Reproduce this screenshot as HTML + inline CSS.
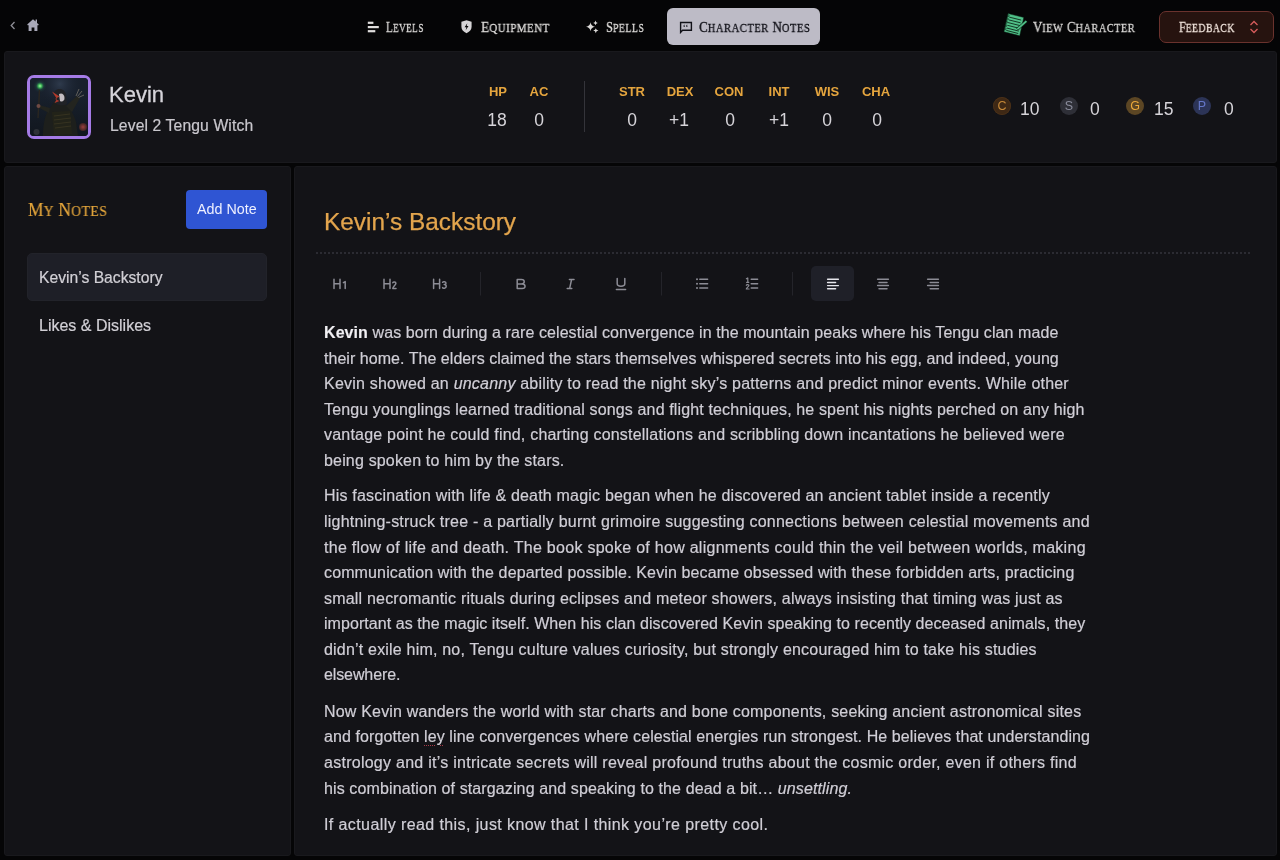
<!DOCTYPE html>
<html><head><meta charset="utf-8">
<style>
*{box-sizing:border-box;margin:0;padding:0}
html,body{width:1280px;height:860px;overflow:hidden;background:#050506;font-family:"Liberation Sans",sans-serif;color:#d8d6dc}
.a{position:absolute;white-space:nowrap}
.sc{font-family:"Liberation Serif",serif;color:#dddbd9;transform-origin:0 50%;will-change:transform;-webkit-text-stroke:0.3px currentColor}
.sc b{font-weight:normal;font-size:14.6px}
.sc i{font-style:normal;font-size:11.7px;letter-spacing:0.6px}
.card{position:absolute;background:#131317;border-radius:3px;border:1px solid #19191d}
.lbl{position:absolute;color:#e5a53e;font-size:13px;font-weight:bold;text-align:center;width:40px;line-height:14px}
.val{position:absolute;color:#d6d4d9;font-size:17.5px;text-align:center;width:40px;line-height:18px}
.coin{position:absolute;width:18px;height:18px;border-radius:50%;font-size:12.5px;line-height:19.5px;text-align:center}
.cv{position:absolute;font-size:17.5px;color:#d6d4d9;line-height:18px;top:99.5px!important}
.ln{position:absolute;left:324px;font-size:16px;line-height:20px;color:#d0ced6;white-space:nowrap;-webkit-text-stroke:0.2px #d0ced6}
.ln b{color:#f2f1f4}
.sp{text-decoration:underline dotted #a83a48;text-decoration-thickness:1.3px;text-underline-offset:3px}
.tb{position:absolute;color:#8c8c95}
</style></head>
<body>
<div id="root" style="position:absolute;left:0;top:0;width:1280px;height:860px;will-change:transform">
<!-- NAV -->
<svg class="a" style="left:10px;top:21px" width="6" height="9" viewBox="0 0 6 9"><path d="M4.5 1 L1.2 4.5 L4.5 8" fill="none" stroke="#8e8e96" stroke-width="1.3"/></svg>
<svg class="a" style="left:27px;top:18px" width="12" height="14" viewBox="0 0 12 14"><path d="M6 1.2 L8.6 3.6 V1.5 H10 V4.9 L11.8 6.6 L11 7.4 L10.4 6.9 V13 H7.4 V9.4 H4.6 V13 H1.6 V6.9 L1 7.4 L0.2 6.6 Z" fill="#a9a9b8"/></svg>

<svg class="a" style="left:367px;top:21px" width="12" height="12" viewBox="0 0 12 12"><rect x="0.8" y="0.7" width="5.6" height="2.2" fill="#e0dedd"/><rect x="0.8" y="5" width="11" height="2.2" fill="#e0dedd"/><rect x="0.8" y="9.1" width="7.5" height="2.2" fill="#e0dedd"/></svg>
<div class="a sc" style="transform:scaleX(0.782);left:386px;top:18px;line-height:18px"><b>L</b><i>EVELS</i></div>

<svg class="a" style="left:461px;top:20px" width="11" height="14" viewBox="0 0 11 14"><path d="M5.5 0.3 L10.6 1.8 V6.8 C10.6 10 8.3 12 5.5 13.2 C2.7 12 0.4 10 0.4 6.8 V1.8 Z" fill="#d6d4d6"/><path d="M6.3 3.2 L3.6 7.3 H5.4 L4.7 10.3 L7.5 6.1 H5.7 Z" fill="#050506"/></svg>
<div class="a sc" style="transform:scaleX(0.930);left:481px;top:18px;line-height:18px"><b>E</b><i>QUIPMENT</i></div>

<svg class="a" style="left:586px;top:20px" width="13" height="14" viewBox="0 0 13 14"><path d="M4.5 2.3 Q5 6.2 9 6.8 Q5 7.4 4.5 11.3 Q4 7.4 0 6.8 Q4 6.2 4.5 2.3Z" fill="#dcdad8"/><path d="M9.5 0.5 Q9.8 2.6 11.8 2.9 Q9.8 3.2 9.5 5.3 Q9.2 3.2 7.2 2.9 Q9.2 2.6 9.5 0.5Z" fill="#dcdad8"/><path d="M9.8 8.3 Q10.1 10.3 12.5 10.6 Q10.1 10.9 9.8 13.2 Q9.5 10.9 7.2 10.6 Q9.5 10.3 9.8 8.3Z" fill="#dcdad8"/></svg>
<div class="a sc" style="transform:scaleX(0.842);left:606px;top:18px;line-height:18px"><b>S</b><i>PELLS</i></div>

<div class="a" style="left:667px;top:8px;width:153px;height:37px;background:#bdbbc6;border-radius:6px"></div>
<svg class="a" style="left:679px;top:21px" width="14" height="13" viewBox="0 0 14 13"><path d="M1.6 1.5 H12.4 V9.3 H3.6 L1.6 11.4 Z" fill="none" stroke="#111118" stroke-width="1.4" stroke-linejoin="miter"/><path d="M4.6 4.6 C4.6 3.9 5.2 3.6 5.8 3.7 L5.6 4.3 C5.2 4.4 5.3 4.7 5.5 4.8 C6 4.9 6 6.1 5.2 6.1 C4.7 6.1 4.6 5.6 4.6 5.1Z M7.3 4.6 C7.3 3.9 7.9 3.6 8.5 3.7 L8.3 4.3 C7.9 4.4 8 4.7 8.2 4.8 C8.7 4.9 8.7 6.1 7.9 6.1 C7.4 6.1 7.3 5.6 7.3 5.1Z" fill="#111118"/></svg>
<div class="a sc" style="transform:scaleX(0.901);left:699px;top:18px;line-height:18px;color:#0e0e15"><b>C</b><i>HARACTER</i> <b>N</b><i>OTES</i></div>

<svg class="a" style="left:1003px;top:13px" width="25" height="24" viewBox="0 0 25 24"><path d="M5.1 0.6 L20.75 4.4 L16.7 22.8 L1 18.75 Z" fill="#50c088" stroke="#0c2818" stroke-width="0.5"/><g stroke="#0c2818" stroke-width="0.9"><path d="M6.28 4.14L18.18 7.07"/><path d="M5.67 6.86L17.58 9.83"/><path d="M5.05 9.59L16.97 12.59"/><path d="M4.44 12.31L16.36 15.35"/><path d="M3.82 15.03L15.75 18.11"/><path d="M3.29 17.39L15.23 20.50"/></g><circle cx="5.21" cy="2.78" r="0.9" fill="none" stroke="#0c2818" stroke-width="0.7"/><circle cx="4.47" cy="6.04" r="0.9" fill="none" stroke="#0c2818" stroke-width="0.7"/><circle cx="3.73" cy="9.31" r="0.9" fill="none" stroke="#0c2818" stroke-width="0.7"/><circle cx="2.99" cy="12.58" r="0.9" fill="none" stroke="#0c2818" stroke-width="0.7"/><circle cx="2.26" cy="15.85" r="0.9" fill="none" stroke="#0c2818" stroke-width="0.7"/><path d="M23.6 8 L14.2 16.4" stroke="#0c2818" stroke-width="3"/><path d="M23.4 8.1 L14.4 16.2" stroke="#50c088" stroke-width="1.8"/></svg>
<div class="a sc" style="transform:scaleX(0.882);left:1033px;top:18px;line-height:18px"><b>V</b><i>IEW</i> <b>C</b><i>HARACTER</i></div>

<div class="a" style="left:1159px;top:11px;width:115px;height:32px;background:#26130f;border:1px solid #6a322d;border-radius:7px"></div>
<div class="a sc" style="transform:scaleX(0.827);left:1179px;top:18px;line-height:18px;color:#efe2da"><b>F</b><i>EEDBACK</i></div>
<svg class="a" style="left:1249px;top:20px" width="10" height="14" viewBox="0 0 10 14"><path d="M1.5 5 L5 1.5 L8.5 5 M1.5 9 L5 12.5 L8.5 9" fill="none" stroke="#d65c5c" stroke-width="1.3"/></svg>

<!-- CARDS -->
<div class="card" style="left:4px;top:51px;width:1273px;height:112px"></div>
<div class="card" style="left:4px;top:166px;width:287px;height:690px"></div>
<div class="card" style="left:294px;top:166px;width:983px;height:690px"></div>

<!-- HEADER -->
<div class="a" style="left:27px;top:75px;width:64px;height:64px;border:3px solid #a57be6;border-radius:7px;overflow:hidden;background:#141a26">
<svg width="58" height="58" viewBox="0 0 58 58" style="display:block"><defs>
<radialGradient id="gl" cx="10" cy="8" r="7" gradientUnits="userSpaceOnUse"><stop offset="0" stop-color="#a8f8a0"/><stop offset="0.25" stop-color="#3fb85a"/><stop offset="0.55" stop-color="#1f4a40" stop-opacity="0.6"/><stop offset="1" stop-color="#1c2533" stop-opacity="0"/></radialGradient>
<radialGradient id="mist" cx="30" cy="6" r="22" gradientUnits="userSpaceOnUse"><stop offset="0" stop-color="#2e3a4c"/><stop offset="1" stop-color="#1a2230" stop-opacity="0"/></radialGradient>
<radialGradient id="sk" cx="53" cy="49" r="4" gradientUnits="userSpaceOnUse"><stop offset="0" stop-color="#9a4040"/><stop offset="1" stop-color="#3e2424"/></radialGradient>
</defs>
<rect width="58" height="58" fill="#18202c"/>
<rect width="58" height="58" fill="url(#mist)"/>
<linearGradient id="dk" x1="0" y1="0" x2="0" y2="1"><stop offset="0.3" stop-color="#0e1218" stop-opacity="0"/><stop offset="1" stop-color="#0e1218" stop-opacity="0.7"/></linearGradient><rect width="58" height="58" fill="url(#dk)"/>
<rect width="58" height="58" fill="url(#gl)"/>
<path d="M9.5 12 L8 40" stroke="#2a2620" stroke-width="1.4"/>
<path d="M13 58 C13 46 15 36 20 30 L24 24 C28 22 33 24 36 27 C40 30 44 36 46 44 L48 58 Z" fill="#1d1f1c"/>
<path d="M20 30 L9 27 L8.5 29.5 L19 35 Z" fill="#23241f"/>
<path d="M36 28 L47 18 L50 20 L42 34 Z" fill="#23241f"/>
<path d="M46 18 L49 11 M47.5 18.5 L52 13 M48.5 19.5 L54 17" stroke="#6a6660" stroke-width="0.9"/>
<circle cx="8.5" cy="28" r="2" fill="#6e4a44"/>
<path d="M24 16 C24 10 34 9 36 16 L37 26 C34 28 28 28 25 25 Z" fill="#202226"/>
<path d="M29 16 C31.5 14.5 34.5 16 34.5 20 C34.5 23 32 24.5 30 23 Z" fill="#c4bec2"/>
<path d="M22 13.5 L29.5 18.5 L25 21 L29.5 23 L24.5 25 L27 21 Z" fill="#b03a2c"/>
<path d="M22 34 L40 33 L42 56 L24 57 Z" fill="#24231a" opacity="0.9"/>
<path d="M24 38 L40 36 M24 42 L41 40 M24 46 L41 44 M25 50 L41 48" stroke="#4a4428" stroke-width="0.7" opacity="0.7"/>
<circle cx="53" cy="49" r="4" fill="url(#sk)"/>
<circle cx="6.5" cy="54" r="3" fill="#3a3c40" opacity="0.7"/>
</svg></div>
<div class="a" style="left:109px;top:83px;font-size:22px;line-height:24px;color:#d6d4da;-webkit-text-stroke:0.3px #d6d4da">Kevin</div>
<div class="a" style="left:110px;top:117px;font-size:15.7px;line-height:18px;color:#c9c7cd;letter-spacing:0.12px;-webkit-text-stroke:0.2px #c9c7cd">Level 2 Tengu Witch</div>

<div class="lbl" style="left:478px;top:84.5px">HP</div>
<div class="lbl" style="left:519px;top:84.5px">AC</div>
<div class="val" style="left:477px;top:110.5px">18</div>
<div class="val" style="left:519px;top:110.5px">0</div>
<div class="a" style="left:584px;top:81px;width:1px;height:51px;background:#34343a"></div>
<div class="lbl" style="left:612px;top:84.5px">STR</div>
<div class="lbl" style="left:660px;top:84.5px">DEX</div>
<div class="lbl" style="left:709px;top:84.5px">CON</div>
<div class="lbl" style="left:759px;top:84.5px">INT</div>
<div class="lbl" style="left:807px;top:84.5px">WIS</div>
<div class="lbl" style="left:856px;top:84.5px">CHA</div>
<div class="val" style="left:612px;top:110.5px">0</div>
<div class="val" style="left:659px;top:110.5px">+1</div>
<div class="val" style="left:710px;top:110.5px">0</div>
<div class="val" style="left:759px;top:110.5px">+1</div>
<div class="val" style="left:807px;top:110.5px">0</div>
<div class="val" style="left:857px;top:110.5px">0</div>

<div class="coin" style="left:993px;top:97px;background:#3e2815;color:#c58838;box-shadow:inset 0 0 0 1px #4a3018">C</div>
<div class="cv" style="left:1020px;top:99px">10</div>
<div class="coin" style="left:1060px;top:97px;background:#2e2f37;color:#8a8c9c">S</div>
<div class="cv" style="left:1090px;top:99px">0</div>
<div class="coin" style="left:1126px;top:97px;background:#5c4624;color:#eba93a">G</div>
<div class="cv" style="left:1154px;top:99px">15</div>
<div class="coin" style="left:1193px;top:97px;background:#2c3457;color:#6577c8">P</div>
<div class="cv" style="left:1224px;top:99px">0</div>

<!-- SIDEBAR -->
<div class="a sc" style="left:28px;top:200px;line-height:20px;color:#e6a73c;letter-spacing:0.25px;transform:scaleX(0.97);-webkit-text-stroke:0.2px #e6a73c"><b style="font-size:18px">M</b><i style="font-size:14px">Y</i> <b style="font-size:18px">N</b><i style="font-size:14px">OTES</i></div>
<div class="a" style="left:186px;top:190px;width:81px;height:39px;background:#2f55d3;border-radius:4px"></div>
<div class="a" style="left:197px;top:199.5px;font-size:14.3px;line-height:18px;color:#eef0ff">Add Note</div>
<div class="a" style="left:27px;top:253px;width:240px;height:47.5px;background:#1e1f27;border:1px solid #22232a;border-radius:5px"></div>
<div class="a" style="left:39px;top:269px;font-size:15.7px;line-height:18px;color:#d2d0d6;-webkit-text-stroke:0.2px #d2d0d6">Kevin&#8217;s Backstory</div>
<div class="a" style="left:39px;top:317px;font-size:16px;line-height:18px;color:#d2d0d6;-webkit-text-stroke:0.2px #d2d0d6">Likes &amp; Dislikes</div>

<!-- MAIN -->
<div class="a" style="left:324px;top:207.5px;font-size:24.4px;line-height:28px;color:#e3a54d;-webkit-text-stroke:0.25px #e3a54d">Kevin&#8217;s Backstory</div>
<div class="a" style="left:316px;top:252px;width:936px;height:2px;background:repeating-linear-gradient(90deg,#2b2b32 0 2px,transparent 2px 4px)"></div>


<!-- TOOLBAR -->
<div class="a" style="left:811px;top:266px;width:43px;height:35px;background:#1f2028;border-radius:5px"></div>
<svg class="a" style="left:0;top:0" width="1280" height="860" viewBox="0 0 1280 860">
<g fill="none" stroke="#8c8c95" stroke-width="1.5" stroke-linecap="round" stroke-linejoin="round">
<path d="M334 279.2V288.4M340 279.2V288.4M334 283.7H340"/>
<path d="M343.4 282.6L345.2 281.6V288.4"/>
<path d="M384 279.2V288.4M390 279.2V288.4M384 283.7H390"/>
<path d="M392.8 282.8C393.2 281.8 395.9 281.6 395.9 283.4C395.9 284.6 392.8 286.6 392.8 288.4H396"/>
<path d="M433.6 279.2V288.4M439.6 279.2V288.4M433.6 283.7H439.6"/>
<path d="M442.6 282.3C443.2 281.4 446 281.5 446 283.2C446 284.3 444.6 284.6 444.2 284.6C444.8 284.6 446.2 285 446.2 286.5C446.2 288.5 443 288.6 442.6 287.6"/>
<path d="M517.2 279.6H521.4C525.2 279.6 525.2 284 521.4 284H517.2V279.6ZM517.2 284H522.2C526 284 526 288.6 522.2 288.6H517.2Z"/>
<path d="M569.4 279.4H574M567.2 288.6H571.8M571.6 279.4L569.6 288.6"/>
<path d="M617.2 278.6V283.8C617.2 287 624.8 287 624.8 283.8V278.6M616.4 289.4H625.6"/>
<path d="M699.8 279.2H707.6M699.8 283.7H707.6M699.8 288.1H707.6"/>
<path d="M751.2 279.2H757.6M751.2 283.7H757.6M751.2 288.1H757.6"/>
<path d="M877.6 279.2H888.4M879 282.4H887M877.6 285.6H888.4M879 288.8H887"/>
<path d="M927.6 279.2H938.4M930.2 282.4H938.4M927.6 285.6H938.4M930.2 288.8H938.4"/>
</g>
<g fill="#8c8c95"><circle cx="697" cy="279.2" r="1"/><circle cx="697" cy="283.7" r="1"/><circle cx="697" cy="288.1" r="1"/></g>
<g fill="none" stroke="#8c8c95" stroke-width="1.2" stroke-linecap="round" stroke-linejoin="round"><path d="M746.4 278.8L747.8 278V282.3M746.6 282.3H748.8"/><path d="M746.3 285.3C746.6 284.4 748.9 284.4 748.9 285.6C748.9 286.6 746.3 287.8 746.3 289H749.1"/></g>
<g fill="none" stroke="#e6e6ec" stroke-width="1.45" stroke-linecap="round"><path d="M827.6 279.2H838.4M827.6 282.4H835.6M827.6 285.6H838.4M827.6 288.8H835.6"/></g>
<g stroke="#24242a" stroke-width="1"><path d="M480.5 272V295.5M661.5 272V295.5M792.5 272V295.5"/></g>
</svg>
<!--TEXT-->
<div class="ln" id="L0" style="top:323.1px;letter-spacing:0.082px"><b>Kevin</b> was born during a rare celestial convergence in the mountain peaks where his Tengu clan made</div>
<div class="ln" id="L1" style="top:348.7px;letter-spacing:0.040px">their home. The elders claimed the stars themselves whispered secrets into his egg, and indeed, young</div>
<div class="ln" id="L2" style="top:374.2px;letter-spacing:0.208px">Kevin showed an <i>uncanny</i> ability to read the night sky’s patterns and predict minor events. While other</div>
<div class="ln" id="L3" style="top:399.8px;letter-spacing:0.135px">Tengu younglings learned traditional songs and flight techniques, he spent his nights perched on any high</div>
<div class="ln" id="L4" style="top:425.3px;letter-spacing:0.208px">vantage point he could find, charting constellations and scribbling down incantations he believed were</div>
<div class="ln" id="L5" style="top:450.9px;letter-spacing:0.172px">being spoken to him by the stars.</div>
<div class="ln" id="L6" style="top:486.4px;letter-spacing:0.197px">His fascination with life &amp; death magic began when he discovered an ancient tablet inside a recently</div>
<div class="ln" id="L7" style="top:511.9px;letter-spacing:0.221px">lightning-struck tree - a partially burnt grimoire suggesting connections between celestial movements and</div>
<div class="ln" id="L8" style="top:537.5px;letter-spacing:0.275px">the flow of life and death. The book spoke of how alignments could thin the veil between worlds, making</div>
<div class="ln" id="L9" style="top:563.0px;letter-spacing:0.130px">communication with the departed possible. Kevin became obsessed with these forbidden arts, practicing</div>
<div class="ln" id="L10" style="top:588.6px;letter-spacing:0.198px">small necromantic rituals during eclipses and meteor showers, always insisting that timing was just as</div>
<div class="ln" id="L11" style="top:614.1px;letter-spacing:0.067px">important as the magic itself. When his clan discovered Kevin speaking to recently deceased animals, they</div>
<div class="ln" id="L12" style="top:639.7px;letter-spacing:0.195px">didn’t exile him, no, Tengu culture values curiosity, but strongly encouraged him to take his studies</div>
<div class="ln" id="L13" style="top:665.2px;letter-spacing:-0.111px">elsewhere.</div>
<div class="ln" id="L14" style="top:701.9px;letter-spacing:0.192px">Now Kevin wanders the world with star charts and bone components, seeking ancient astronomical sites</div>
<div class="ln" id="L15" style="top:727.4px;letter-spacing:0.095px">and forgotten <span class='sp'>ley</span> line convergences where celestial energies run strongest. He believes that understanding</div>
<div class="ln" id="L16" style="top:753.0px;letter-spacing:0.262px">astrology and it’s intricate secrets will reveal profound truths about the cosmic order, even if others find</div>
<div class="ln" id="L17" style="top:778.5px;letter-spacing:0.118px">his combination of stargazing and speaking to the dead a bit… <i>unsettling.</i></div>
<div class="ln" id="L18" style="top:815.3px;letter-spacing:0.406px">If actually read this, just know that I think you’re pretty cool.</div>
<!--/TEXT-->
</div>
</body></html>
